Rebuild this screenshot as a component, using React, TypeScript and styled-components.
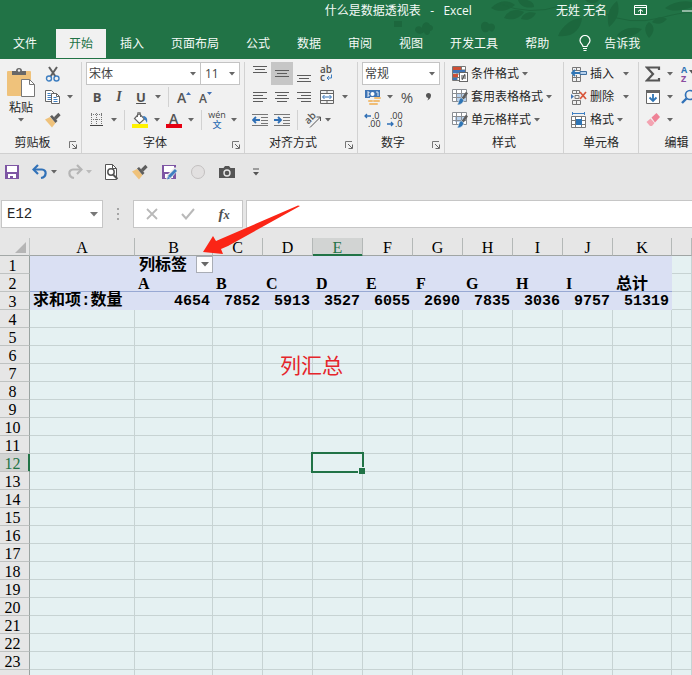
import React from "react";
import styled, { createGlobalStyle, css } from "styled-components";

const ui = `"Open Sans", "Noto Sans CJK SC", sans-serif`;
const serif = `"Liberation Serif", "Noto Sans CJK SC", serif`;
const mono = `"Liberation Mono", "Noto Sans CJK SC", monospace`;
const green = "#217346";

const GlobalStyle = createGlobalStyle`
  * { box-sizing: border-box; }
  body { margin: 0; overflow: hidden; background: #e6e6e6; }
  button, input, select { font: inherit; color: inherit; margin: 0; padding: 0; border: 0; background: none; border-radius: 0; }
  svg { display: block; flex: none; }
`;

const Page = styled.div`
  display: flex;
  flex-direction: column;
  height: 100vh;
  overflow: hidden;
  background: #e6e6e6;
  color: #262626;
  font: 12px/18px ${ui};
  white-space: nowrap;
`;

const Head = styled.header`
  position: relative;
  flex: none;
  background: ${green};
  color: #f4faf6;
`;

const Leaves = styled.svg`
  position: absolute;
  top: 0;
  right: 0;
`;

const TitleBar = styled.div`
  position: relative;
  display: flex;
  justify-content: flex-end;
  align-items: center;
  height: 29px;
  padding-bottom: 8px;
`;

const Title = styled.h1`
  margin: 0 84px 0 0;
  font: inherit;
  white-space: pre;
`;

const UserName = styled.span`
  margin-right: 27px;
`;

const WindowButton = styled.button<{ $gap?: number }>`
  margin-right: ${(p) => p.$gap ?? 0}px;
`;

const Tabs = styled.nav`
  position: relative;
  display: flex;
  gap: 1px;
  height: 29px;
`;

const Tab = styled.button<{ $active?: boolean; $first?: boolean }>`
  flex: none;
  padding: 0 13px;
  ${(p) => p.$first && css`min-width: 55px; text-align: left;`}
  ${(p) => p.$active && css`background: #f1f1f1; color: ${green};`}
`;

const TellMe = styled.button`
  display: flex;
  align-items: center;
  gap: 13px;
  padding: 0 16px;
`;

const Ribbon = styled.section`
  display: flex;
  flex: none;
  overflow: hidden;
  background: #f1f1f1;
  border-top: 1px solid ${green};
  border-bottom: 1px solid #d0d0d0;
  padding-top: 3px;
`;

const GroupBox = styled.div<{ $left: number; $right: number }>`
  display: flex;
  flex: none;
  flex-direction: column;
  border-right: 1px solid #d2d2d2;
  & > :first-child {
    padding: 0 ${(p) => p.$right}px 0 ${(p) => p.$left}px;
  }
`;

const Rows = styled.div`
  display: grid;
  grid-template-rows: repeat(3, 23px);
`;

const Row = styled.div`
  display: flex;
  align-items: center;
`;

const GroupFoot = styled.div<{ $launcher?: boolean }>`
  display: grid;
  grid-template-columns: ${(p) => (p.$launcher ? "1fr 16px" : "1fr")};
  align-items: center;
  height: 22px;
  padding-top: 2px;
  text-align: center;
`;

const Launcher = styled.button`
  display: flex;
  justify-content: center;
  padding-top: 4px;
`;

const Tool = styled.button<{ $w?: number; $on?: boolean }>`
  display: flex;
  align-items: center;
  justify-content: center;
  flex: none;
  width: ${(p) => p.$w ?? 22}px;
  height: 23px;
  background: ${(p) => (p.$on ? "#c6c6c6" : "none")};
`;

const Glyph = styled.span<{ $size?: number; $italic?: boolean; $underline?: boolean; $face?: string; $weight?: number }>`
  color: #505050;
  font-family: ${(p) => p.$face ?? ui};
  font-weight: ${(p) => p.$weight ?? 700};
  font-size: ${(p) => p.$size ?? 13}px;
  font-style: ${(p) => (p.$italic ? "italic" : "normal")};
  text-decoration: ${(p) => (p.$underline ? "underline" : "none")};
`;

const Divider = styled.span`
  width: 1px;
  height: 20px;
  margin: 0 4px;
  background: #d2d2d2;
`;

const PickerBox = styled.label<{ $w: number; $joined?: boolean }>`
  display: grid;
  grid-template-columns: 1fr 14px;
  align-items: center;
  width: ${(p) => p.$w}px;
  height: 23px;
  background: #fff;
  border: 1px solid #c4c4c4;
  border-left-width: ${(p) => (p.$joined ? 0 : 1)}px;
  svg { justify-self: center; }
  select {
    appearance: none;
    width: 100%;
    padding-left: ${(p) => (p.$joined ? 4 : 2)}px;
    color: #444;
    outline: none;
  }
`;

const Clipboard = styled.div`
  display: grid;
  grid-template-columns: 42px auto;
`;

const PasteButton = styled.button`
  display: flex;
  flex-direction: column;
  align-items: center;
  gap: 3px;
  padding-top: 5px;
  line-height: 14px;
`;

const Command = styled.button<{ $gap?: number }>`
  display: flex;
  align-items: center;
  gap: 3px;
  & > :last-child {
    margin-left: ${(p) => p.$gap ?? 0}px;
  }
`;

const QuickAccess = styled.div`
  display: flex;
  flex: none;
  align-items: center;
  gap: 7px;
  height: 36px;
  padding-left: 1px;
`;

const Pair = styled.div`
  display: flex;
`;

const FormulaBar = styled.div`
  display: flex;
  flex: none;
  height: 28px;
  margin: 10px 0;
  padding-left: 1px;
`;

const NameBox = styled.label`
  display: flex;
  align-items: center;
  width: 102px;
  padding: 0 4px 0 5px;
  border: 1px solid #c6c6c6;
  background: #fff;
  input {
    flex: 1;
    min-width: 0;
    outline: none;
    font: 14px/20px ${mono};
  }
`;

const Dots = styled.span`
  display: flex;
  flex: none;
  align-items: center;
  justify-content: center;
  width: 30px;
`;

const EntryButtons = styled.div`
  display: flex;
  flex: none;
  align-items: center;
  margin-right: 3px;
  border: 1px solid #c6c6c6;
  background: #fff;
`;

const FormulaInput = styled.input`
  && {
    flex: 1;
    min-width: 0;
    border: 1px solid #c6c6c6;
    border-right: 0;
    background: #fff;
    outline: none;
  }
`;

const Sheet = styled.main`
  position: relative;
  flex: 1;
  min-height: 0;
  color: #000;
`;

const SheetClip = styled.div`
  height: 100%;
  overflow: hidden;
`;

const Grid = styled.table`
  width: 100%;
  table-layout: fixed;
  border-collapse: separate;
  border-spacing: 0;
  font: 16px/15px ${serif};
  th { font-weight: normal; }
  th, td { height: 18px; padding: 2px 0 0; }
`;

const Corner = styled.th`
  border-right: 1px solid #c0c4c3;
  border-bottom: 1px solid #a3a8a7;
  svg { margin-left: auto; margin-right: 3px; }
`;

const ColHead = styled.th<{ $on?: boolean }>`
  border-right: 1px solid #b4b8b7;
  border-bottom: 1px solid #a0a5a4;
  ${(p) => p.$on && css`
    background: #d2d4d3;
    color: ${green};
    box-shadow: inset 0 -1px ${green};
    border-bottom-color: ${green};
  `}
`;

const RowHead = styled.th<{ $on?: boolean }>`
  && { padding-right: 4px; }
  border-right: 1px solid #9aa3a1;
  border-bottom: 1px solid #bfc2c1;
  ${(p) => p.$on && css`
    background: #d2d4d3;
    color: ${green};
    box-shadow: inset -1px 0 ${green};
    border-right-color: ${green};
  `}
`;

const Cell = styled.td`
  background: #e5f1f2;
  border-right: 1px solid #c7d3d3;
  border-bottom: 1px solid #c7d3d3;
`;

const ActiveCell = styled(Cell)`
  position: relative;
`;

const PivotCell = styled.td<{ $num?: boolean; $mono?: boolean; $rule?: boolean; $flush?: boolean }>`
  && { padding: ${(p) => (p.$flush ? "0 0 0 4px" : "2px 3px 0")}; }
  background: #dae0f3;
  border-bottom: 1px solid ${(p) => (p.$rule ? "#98a9d3" : "#dae0f3")};
  font-weight: bold;
  font-family: ${(p) => (p.$num || p.$mono ? mono : serif)};
  font-size: ${(p) => (p.$num ? 15 : 16)}px;
  text-align: ${(p) => (p.$num ? "right" : "left")};
`;

const Filtered = styled.div`
  display: flex;
  align-items: center;
  justify-content: space-between;
`;

const FilterButton = styled.button`
  display: flex;
  align-items: center;
  justify-content: center;
  width: 17px;
  height: 17px;
  border: 1px solid #a9adb5;
  background: #fcfcfd;
`;

const Selection = styled.span`
  position: absolute;
  inset: -2px;
  z-index: 1;
  border: 2px solid ${green};
  &::after {
    content: "";
    position: absolute;
    right: -3px;
    bottom: -3px;
    width: 6px;
    height: 6px;
    background: ${green};
    border: solid #e5f1f2;
    border-width: 1px 0 0 1px;
  }
`;

const Note = styled.span`
  position: absolute;
  left: 280px;
  top: 112px;
  color: #e5252b;
  font: 21px/28px "Noto Sans CJK SC", sans-serif;
`;

const Pointer = styled.svg`
  position: absolute;
  left: 203px;
  top: -34px;
  z-index: 2;
`;

type SvgProps = { w?: number; h?: number; children: React.ReactNode };
const Svg = ({ w = 16, h = 16, children }: SvgProps) => (
  <svg width={w} height={h} viewBox={`0 0 ${w} ${h}`} fill="none" aria-hidden="true">
    {children}
  </svg>
);

const Down = ({ color = "#666" }: { color?: string }) => (
  <Svg w={6} h={4}><path d="M0 0h6L3 3.6z" fill={color} /></Svg>
);

const Caret = ({ label, w = 12, color }: { label: string; w?: number; color?: string }) => (
  <Tool $w={w} aria-label={label}><Down color={color} /></Tool>
);

const Lines = ({ rows }: { rows: [number, number, number][] }) => (
  <Svg>
    {rows.map(([x, y, w]) => <path key={y} d={`M${x} ${y}.5h${w}`} stroke="#5c5c5c" />)}
  </Svg>
);

const LauncherIcon = () => (
  <Svg w={8} h={8}>
    <path d="M.5 7V.5H7" stroke="#777" />
    <path d="M3 3l4 4M7.500 3.500v4h-4" stroke="#666" />
  </Svg>
);

const PasteIcon = () => (
  <Svg w={30} h={31}>
    <rect x="1" y="4" width="24" height="25" rx="1" fill="#efc27b" />
    <path d="M6 8V4h4a3 3 0 0 1 6 0h4v4z" fill="#686868" />
    <circle cx="13" cy="3.500" r="1.200" fill="#f1f1f1" />
    <path d="M15.500 12.500h8l5 5v12h-13z" fill="#fff" stroke="#777" />
    <path d="M23.500 12.500v5h5" stroke="#777" />
  </Svg>
);

const CutIcon = () => (
  <Svg>
    <path d="M4 1l6.500 9.500M12 1L5.500 10.500" stroke="#5f5f5f" strokeWidth="2" />
    <circle cx="4" cy="12.500" r="2.500" stroke="#3f7fc1" strokeWidth="1.400" />
    <circle cx="11.500" cy="12.500" r="2.500" stroke="#3f7fc1" strokeWidth="1.400" />
  </Svg>
);

const CopyIcon = () => (
  <Svg>
    <path d="M.5 1.500h6l3 3v8h-9z" fill="#fff" stroke="#666" />
    <path d="M2.500 4.500h3M2.500 6.500h4M2.500 8.500h4M2.500 10.500h4" stroke="#3f7fc1" />
    <path d="M6.500 4.500h5l3 3v7h-8z" fill="#fff" stroke="#666" />
    <path d="M11.500 4.500v3h3" stroke="#666" />
    <path d="M8.500 8.500h3M8.500 10.500h4M8.500 12.500h4" stroke="#3f7fc1" />
  </Svg>
);

const BrushIcon = () => (
  <Svg>
    <path d="M0 7.500l5-2.500 5.500 6L7 15.500z" fill="#efc27b" />
    <path d="M5 4.500l2-1.500 5.500 6-2 2z" fill="#5e5e5e" />
    <path d="M10 6.500l4.500-4.500" stroke="#5e5e5e" strokeWidth="3.200" />
  </Svg>
);

const GrowIcon = ({ shrink }: { shrink?: boolean }) => (
  <Svg w={18} h={22}>
    <text x="2" y="17" fontFamily="Open Sans" fontWeight="600" fontSize={shrink ? 12 : 14} fill="#555">A</text>
    <path d={shrink ? "M10 6h5l-2.500 3z" : "M11 9h5l-2.500-3z"} fill="#3f6fb5" />
  </Svg>
);

const BorderIcon = () => (
  <Svg>
    <path d="M2.500 1v13M7.500 1v13M12.500 1v13M2 2.500h12M2 7.500h12" stroke="#777" strokeDasharray="1 1" />
    <path d="M1 13.500h13" stroke="#444" />
  </Svg>
);

const FillIcon = () => (
  <Svg w={18}>
    <path d="M8 1.500l5.500 5.500-5 4.500-5-5z" fill="#fff" stroke="#666" strokeWidth="1.200" />
    <path d="M6.500 5V1.500a1.500 1.500 0 0 1 3 0V5" stroke="#666" />
    <path d="M12 4c3 0 5 2 4 7-1-1-1-3-3-4z" fill="#3f7fc1" />
    <path d="M1 12h16v4H1z" fill="#fff200" />
  </Svg>
);

const FontColorIcon = () => (
  <Svg h={22}>
    <text x="3" y="15" fontFamily="Open Sans" fontWeight="600" fontSize="14" fill="#555">A</text>
    <path d="M0 15h16v4H0z" fill="#e60012" />
  </Svg>
);

const Phonetic = styled.span`
  display: grid;
  justify-items: center;
  font-size: 9px;
  line-height: 10px;
  color: #444;
  b { color: #2f6fb5; font-weight: 500; }
`;

const WrapIcon = () => (
  <Svg w={18} h={22}>
    <text x="2" y="10" fontFamily="Open Sans" fontWeight="600" fontSize="10" fill="#505050">ab</text>
    <text x="2" y="18" fontFamily="Open Sans" fontWeight="600" fontSize="10" fill="#505050">c</text>
    <path d="M13.500 11.500v3.500H9M11 13l-2 2 2 2" stroke="#3f7fc1" />
  </Svg>
);

const MergeIcon = () => (
  <Svg>
    <path d="M1.500 1.500h13v13h-13zM1.500 4.500h13M1.500 11.500h13M8 1v3.500M8 11.500v3" stroke="#666" />
    <path d="M2 5h12v6H2z" fill="#fff" />
    <path d="M4 8h8M5.500 6L3.500 8l2 2M10.500 6l2 2-2 2" stroke="#3272b8" />
  </Svg>
);

const IndentIcon = ({ more }: { more?: boolean }) => (
  <Svg>
    <path d="M0 2.500h16M9 5.500h7M9 8.500h7M9 11.500h7M0 13.500h16" stroke="#777" />
    <path d={more ? "M0 8h7M4 5l3 3-3 3" : "M1 8h7M4 5L1 8l3 3"} stroke="#2f6fb5" strokeWidth="1.800" />
  </Svg>
);

const OrientIcon = () => (
  <Svg w={20} h={20}>
    <text transform="rotate(-45 8 9)" x="2" y="11" fontFamily="Open Sans" fontWeight="600" fontSize="10" fill="#555">ab</text>
    <path d="M7 17.500L17.500 7M13.500 7h4v4" stroke="#555" />
  </Svg>
);

const MoneyIcon = () => (
  <Svg w={18}>
    <path d="M1 1h15v8H1z" fill="#3f74b5" />
    <path d="M3 3h2v1H4v2h1v1H3M14 3h-2M14 7V3" stroke="#dfe9f5" />
    <circle cx="8.500" cy="5" r="2" fill="#fff" />
    <path d="M6 8h12v8H4v-5h2z" fill="#f1f1f1" />
    <g fill="#f0bd75">
      <rect x="10" y="8" width="7" height="2" rx="1" /><rect x="9" y="11" width="7" height="2" rx="1" />
      <rect x="4" y="11" width="5" height="2" rx="1" /><rect x="5" y="14" width="9" height="2" rx="1" />
    </g>
  </Svg>
);

const CommaIcon = () => (
  <Svg w={6} h={8}><path d="M0 2.500a2.500 2.500 0 0 1 5 0C5 5 3 7 1 7.500 2 6.500 2.500 5.500 2 5A2.500 2.500 0 0 1 0 2.500z" fill="#555" /></Svg>
);

const DecimalIcon = ({ less }: { less?: boolean }) => (
  <Svg w={20} h={22}>
    <text x={less ? 5 : 9} y="10" fontFamily="Open Sans" fontSize="9" fill="#333">{less ? ".00" : ".0"}</text>
    <text x={less ? 10 : 5} y="18" fontFamily="Open Sans" fontSize="9" fill="#333">{less ? ".0" : ".00"}</text>
    <path d={less ? "M2 15h6M6 13l2 2-2 2" : "M2 7h6M4 5L2 7l2 2"} stroke="#2f6fb5" strokeWidth="1.300" />
  </Svg>
);

const ConditionalIcon = () => (
  <Svg>
    <path d="M.5.5h13v14H.5zM5 0v15M9.500 0v6M0 4h14M0 8h9M0 11.500h9" fill="#fff" stroke="#777" />
    <path d="M1 1h8v3H1zM1 8h5v3H1z" fill="#cf4f35" /><path d="M1 4h12v3H1zM1 12h4v2H1z" fill="#3f74b5" />
    <rect x="7.500" y="6.500" width="8" height="9" fill="#fff" stroke="#666" />
    <path d="M9 10h5M9 12h5M13 8l-3 6" stroke="#444" />
  </Svg>
);

const StyleIcon = ({ single }: { single?: boolean }) => (
  <Svg>
    <path d="M.5.5h14v12H.5z" fill="#fff" />
    <path d={single ? "M3 4h9v6H3z" : "M4 4h11v9H4z"} fill="#b7d0eb" />
    <path d="M.5.5h14v12H.5zM0 4.500h15M0 8.500h15M4.500 0v13M9.500 0v13" stroke="#8a8e93" />
    <path d="M15 3.500L10.500 10" stroke="#5e5e5e" strokeWidth="2.600" />
    <path d="M9 8.500l3 2.500c-1 3-3 5-7 5 2-2 1-5 4-7.500z" fill="#2f75b5" stroke="#f1f1f1" strokeWidth=".6" />
  </Svg>
);

const InsertIcon = () => (
  <Svg>
    <path d="M1.500 1.500h8v3h-8zM5.500 1v3M1.500 11.500h8v4h-8zM5.500 9v7M1.500 9v3M9.500 9v3" stroke="#777" />
    <path d="M9 5.500h6.500v3H9z" fill="#b7d0eb" stroke="#3f6f9f" />
    <path d="M1 7h8M4 4L1 7l3 3" stroke="#2f75b5" strokeWidth="1.800" />
  </Svg>
);

const DeleteIcon = () => (
  <Svg>
    <path d="M1.500 1.500h7v3h-7zM5.500 1v3M1.500 11.500h8v4h-8zM5.500 11v4M4 6.500h4v3H4z" stroke="#777" />
    <path d="M0 5v5l3-2.500z" fill="#3f74b5" />
    <path d="M9 3l6 7M15 3L9 10" stroke="#d9573b" strokeWidth="1.700" />
  </Svg>
);

const FormatIcon = () => (
  <Svg>
    <path d="M.5 4.500h14v11H.5zM4.500 4v12M10.500 4v12M0 8.500h15M0 12.500h15" fill="#fff" stroke="#777" />
    <path d="M5 7h6v6H5z" fill="#2f75b5" />
    <path d="M1 1.500h13M1.500 0v3M13.500 0v3" stroke="#3f7fc1" />
  </Svg>
);

const SumIcon = () => (
  <Svg><path d="M14 4V1.500H2L8 8l-6 6.500h12V12" stroke="#555" strokeWidth="2.200" /></Svg>
);

const SortIcon = () => (
  <Svg w={20} h={22}>
    <text x="4" y="10" fontFamily="Open Sans" fontWeight="700" fontSize="9" fill="#2f75b5">A</text>
    <text x="4" y="19" fontFamily="Open Sans" fontWeight="700" fontSize="9" fill="#8b4da0">Z</text>
    <path d="M12 7h8l-4 5z" fill="#555" />
  </Svg>
);

const FillDownIcon = () => (
  <Svg>
    <path d="M1.500 1.500h13v13h-13z" fill="#fff" stroke="#666" /><path d="M1 1h14v3H1z" fill="#666" />
    <path d="M8 5v7M4.500 8.500L8 12l3.500-3.500" stroke="#2f75b5" strokeWidth="1.800" />
  </Svg>
);

const FindIcon = () => (
  <Svg w={20}>
    <circle cx="13" cy="6" r="4.500" stroke="#3272b8" strokeWidth="1.700" />
    <path d="M9.500 9.500L5 14" stroke="#3272b8" strokeWidth="2.400" />
  </Svg>
);

const EraserIcon = () => (
  <Svg>
    <path d="M6.500 5.500L11.500 1l3.500 4-5 5.500z" fill="#ee8296" /><path d="M5.500 6.500L9.500 11 7 14H5L1.500 10z" fill="#f3a3b1" />
  </Svg>
);

const SaveIcon = ({ edit }: { edit?: boolean }) => (
  <Svg>
    <path d="M1 1h14v14H1z" fill="#7e56a4" />
    <path d="M3 2h10v6H3z" fill="#fff" />
    <path d="M4 10h8v4H4z" fill="#fff" /><path d="M6 12h3v2H6z" fill="#7e56a4" />
    {edit && <><path d="M5 16l1-5 8-8 3 3-8 10z" fill="#e6e6e6" /><path d="M8 13l7-7" stroke="#3f7fc1" strokeWidth="3" /><path d="M6 15.500l1-3 2 2z" fill="#3f7fc1" /></>}
  </Svg>
);

const UndoIcon = ({ redo }: { redo?: boolean }) => (
  <Svg>
    <g transform={redo ? "matrix(-1 0 0 1 16 0)" : undefined} stroke={redo ? "#b5b5b5" : "#3272b8"} strokeWidth="2.200">
      <path d="M2 5.500h8c5 0 5 7.500-1 8.500" /><path d="M6 1L1.500 5.500 6 10" />
    </g>
  </Svg>
);

const PreviewIcon = () => (
  <Svg>
    <path d="M2.500.5h7l4 4v11h-11z" fill="#fff" stroke="#555" /><path d="M9.500.5v4h4" stroke="#555" />
    <circle cx="8" cy="8" r="3.200" fill="#fff" stroke="#555" strokeWidth="1.500" />
    <path d="M10 10.500l4.500 4.500" stroke="#555" strokeWidth="2" />
  </Svg>
);

const CameraIcon = () => (
  <Svg>
    <path d="M0 4h4.500L6 2h4l1.500 2H16v10H0z" fill="#555" />
    <circle cx="8" cy="9" r="3" fill="#555" stroke="#e6e6e6" strokeWidth="1.400" />
  </Svg>
);

const BulbIcon = () => (
  <Svg w={12} h={17}>
    <path d="M4 11.500c0-2-3-3-3-6a5 5 0 0 1 10 0c0 3-3 4-3 6zM4 13.500h4M4.500 15.500h3" stroke="#fff" strokeWidth="1.200" />
  </Svg>
);

const DisplayIcon = () => (
  <Svg w={13} h={11}>
    <path d="M.5.5h12v9H.5zM.5 2.500h12M6.500 9V4.500M4 6.500l2.500-2L9 6.500" stroke="#fff" />
  </Svg>
);

type PickerProps = { label: string; value: string; w: number; joined?: boolean };
const Picker = ({ label, value, w, joined }: PickerProps) => (
  <PickerBox $w={w} $joined={joined}>
    <select aria-label={label} defaultValue={value}><option>{value}</option></select>
    <Down />
  </PickerBox>
);

type GroupProps = { label: string; left?: number; right?: number; launcher?: boolean; children: React.ReactNode };
const Group = ({ label, left = 4, right = 4, launcher, children }: GroupProps) => (
  <GroupBox $left={left} $right={right}>
    {children}
    <GroupFoot $launcher={launcher}>
      <span>{label}</span>
      {launcher && <Launcher aria-label={`${label}设置`}><LauncherIcon /></Launcher>}
    </GroupFoot>
  </GroupBox>
);

const tabs = ["文件", "开始", "插入", "页面布局", "公式", "数据", "审阅", "视图", "开发工具", "帮助"];
const columns: [string, number][] = [
  ["A", 105], ["B", 78], ["C", 50], ["D", 50], ["E", 50], ["F", 50],
  ["G", 50], ["H", 50], ["I", 50], ["J", 50], ["K", 59],
];
const pivotLabels = ["", "A", "B", "C", "D", "E", "F", "G", "H", "I", "总计"];
const pivotValues = ["4654", "7852", "5913", "3527", "6055", "2690", "7835", "3036", "9757", "51319"];
const emptyRows = Array.from({ length: 21 }, (_, i) => i + 4);

const RibbonGroups = () => (
  <Ribbon>
    <Group label="剪贴板" left={0} right={5} launcher>
      <Clipboard>
        <PasteButton><PasteIcon /><span>粘贴</span><Down /></PasteButton>
        <Rows>
          <Row><Tool aria-label="剪切"><CutIcon /></Tool></Row>
          <Row><Tool aria-label="复制"><CopyIcon /></Tool><Caret label="复制选项" /></Row>
          <Row><Tool aria-label="格式刷"><BrushIcon /></Tool></Row>
        </Rows>
      </Clipboard>
    </Group>
    <Group label="字体" launcher>
      <Rows>
        <Row><Picker label="字体" value="宋体" w={115} /><Picker label="字号" value="11" w={39} joined /></Row>
        <Row>
          <Tool aria-label="加粗"><Glyph>B</Glyph></Tool>
          <Tool aria-label="倾斜"><Glyph $italic $size={14} $face={serif}>I</Glyph></Tool>
          <Tool aria-label="下划线"><Glyph $underline>U</Glyph></Tool>
          <Caret label="下划线选项" /><Divider />
          <Tool aria-label="增大字号"><GrowIcon /></Tool>
          <Tool aria-label="减小字号"><GrowIcon shrink /></Tool>
        </Row>
        <Row>
          <Tool aria-label="边框"><BorderIcon /></Tool><Caret label="边框选项" /><Divider />
          <Tool aria-label="填充颜色"><FillIcon /></Tool><Caret label="填充选项" />
          <Tool aria-label="字体颜色"><FontColorIcon /></Tool><Caret label="颜色选项" /><Divider />
          <Tool aria-label="拼音"><Phonetic>wén<b>文</b></Phonetic></Tool><Caret label="拼音选项" />
        </Row>
      </Rows>
    </Group>
    <Group label="对齐方式" right={6} launcher>
      <Rows>
        <Row>
          <Tool aria-label="顶端对齐"><Lines rows={[[1, 0, 14], [3, 3, 10], [1, 6, 14]]} /></Tool>
          <Tool $on aria-label="垂直居中"><Lines rows={[[1, 4, 14], [3, 7, 10], [1, 10, 14]]} /></Tool>
          <Tool aria-label="底端对齐"><Lines rows={[[1, 9, 14], [3, 12, 10], [1, 15, 14]]} /></Tool>
          <Tool $w={24} aria-label="自动换行"><WrapIcon /></Tool>
        </Row>
        <Row>
          <Tool aria-label="左对齐"><Lines rows={[[1, 3, 14], [1, 6, 10], [1, 9, 14], [1, 12, 10]]} /></Tool>
          <Tool aria-label="居中"><Lines rows={[[1, 3, 14], [3, 6, 10], [1, 9, 14], [3, 12, 10]]} /></Tool>
          <Tool aria-label="右对齐"><Lines rows={[[1, 3, 14], [5, 6, 10], [1, 9, 14], [5, 12, 10]]} /></Tool>
          <Tool $w={24} aria-label="合并"><MergeIcon /></Tool><Caret label="合并选项" />
        </Row>
        <Row>
          <Tool aria-label="减少缩进"><IndentIcon /></Tool>
          <Tool aria-label="增加缩进"><IndentIcon more /></Tool><Divider />
          <Tool aria-label="方向"><OrientIcon /></Tool><Caret label="方向选项" w={8} />
        </Row>
      </Rows>
    </Group>
    <Group label="数字" launcher>
      <Rows>
        <Row><Picker label="数字格式" value="常规" w={78} /></Row>
        <Row>
          <Tool aria-label="货币"><MoneyIcon /></Tool><Caret label="货币选项" />
          <Tool aria-label="百分比"><Glyph $size={15} $weight={500}>%</Glyph></Tool>
          <Tool aria-label="千位分隔"><CommaIcon /></Tool>
        </Row>
        <Row>
          <Tool aria-label="增加小数位"><DecimalIcon /></Tool>
          <Tool aria-label="减少小数位"><DecimalIcon less /></Tool>
        </Row>
      </Rows>
    </Group>
    <Group label="样式" left={7} right={11}>
      <Rows>
        <Command><ConditionalIcon />条件格式<Down /></Command>
        <Command><StyleIcon />套用表格格式<Down /></Command>
        <Command><StyleIcon single />单元格样式<Down /></Command>
      </Rows>
    </Group>
    <Group label="单元格" left={7} right={9}>
      <Rows>
        <Command $gap={6}><InsertIcon />插入<Down /></Command>
        <Command $gap={6}><DeleteIcon />删除<Down /></Command>
        <Command><FormatIcon />格式<Down /></Command>
      </Rows>
    </Group>
    <Group label="编辑" left={3}>
      <Rows>
        <Row><Tool aria-label="求和"><SumIcon /></Tool><Caret label="求和选项" /><Tool aria-label="排序和筛选"><SortIcon /></Tool><Caret label="排序选项" /></Row>
        <Row><Tool aria-label="填充"><FillDownIcon /></Tool><Caret label="填充方向" /><Tool aria-label="查找"><FindIcon /></Tool><Caret label="查找选项" /></Row>
        <Row><Tool aria-label="清除"><EraserIcon /></Tool><Caret label="清除选项" /></Row>
      </Rows>
    </Group>
  </Ribbon>
);

export default function App() {
  return (
    <Page>
      <GlobalStyle />
      <Head>
        <Leaves width="300" height="58" viewBox="392 0 300 58" fill="#1c673d" aria-hidden="true">
          <path d="M491 8c8-8 16-9 24-3-7 6-16 8-24 3zM504 18c4-8 12-10 20-6-5 7-12 9-20 6zM518 0c2 6 8 9 16 7 0-4-3-6-7-7zM521 19c2-6 8-8 15-6-3 6-8 8-15 6z" />
          <path d="M558 36c4-10 14-18 24-18-1 10-8 20-24 18zM609 27c-3-10 0-20 8-26 4 10 0 20-8 26zM617 36c4-7 14-10 25-7-6 7-16 10-25 7zM649 38c-5-6-5-12 0-16 6 4 6 10 0 16zM652 22c4-5 10-6 15-3-4 5-10 6-15 3zM665 8c8-6 18-8 27-6v5c-10 4-20 5-27 1zM585 0c4 4 10 5 14 0z" />
          <path d="M481 26c0-4 5-6 8-2 4-2 8 2 5 6-2 3-4 1-5 0-2 4-8 3-8-4zM394 21h8v6h-8zM415 30c0-4 5-5 7-2 0-6 6-8 8-3 4 0 4 6 0 6 0 5-5 5-6 1-3 3-8 2-9-2z" />
          <path d="M600 12q30 14 60 6t32-4M500 4q30 12 60 2" stroke="#1c673d" fill="none" />
        </Leaves>
        <TitleBar>
          <Title>什么是数据透视表   -   Excel</Title>
          <UserName>无姓 无名</UserName>
          <WindowButton $gap={35} aria-label="功能区显示选项"><DisplayIcon /></WindowButton>
          <WindowButton aria-label="最小化"><Svg w={10} h={2}><path d="M0 1h10" stroke="#fff" /></Svg></WindowButton>
        </TitleBar>
        <Tabs>
          {tabs.map((t, i) => <Tab key={t} $first={i === 0} $active={i === 1}>{t}</Tab>)}
          <TellMe><BulbIcon />告诉我</TellMe>
        </Tabs>
      </Head>
      <RibbonGroups />
      <QuickAccess>
        <Tool aria-label="保存"><SaveIcon /></Tool>
        <Pair><Tool $w={20} aria-label="撤消"><UndoIcon /></Tool><Caret label="撤消列表" w={8} /></Pair>
        <Pair><Tool $w={20} aria-label="恢复"><UndoIcon redo /></Tool><Caret label="恢复列表" w={8} color="#bbb" /></Pair>
        <Tool aria-label="打印预览"><PreviewIcon /></Tool>
        <Tool aria-label="格式刷"><BrushIcon /></Tool>
        <Tool aria-label="另存为"><SaveIcon edit /></Tool>
        <Tool aria-label="录制"><Svg><circle cx="8" cy="8" r="6.500" fill="#e2e0e0" stroke="#c3c0c0" /></Svg></Tool>
        <Tool aria-label="照相机"><CameraIcon /></Tool>
        <Tool aria-label="自定义快速访问工具栏"><Svg w={6} h={8}><path d="M0 1h6" stroke="#555" /><path d="M0 4h6L3 7.500z" fill="#555" /></Svg></Tool>
      </QuickAccess>
      <FormulaBar>
        <NameBox><input aria-label="名称框" defaultValue="E12" /><Svg w={8} h={5}><path d="M0 0h8L4 4.500z" fill="#777" /></Svg></NameBox>
        <Dots><Svg w={2} h={12}><path d="M0 0h2v2H0zM0 5h2v2H0zM0 10h2v2H0z" fill="#a5a5a5" /></Svg></Dots>
        <EntryButtons>
          <Tool $w={36} aria-label="取消"><Svg w={12} h={12}><path d="M1 1l10 10M11 1L1 11" stroke="#b9b9b9" strokeWidth="1.800" /></Svg></Tool>
          <Tool $w={36} aria-label="输入"><Svg w={14} h={12}><path d="M1 6l4 4.500L13 1" stroke="#b9b9b9" strokeWidth="2" /></Svg></Tool>
          <Tool $w={36} aria-label="插入函数"><Glyph $italic $size={15} $face={serif}>f<small>x</small></Glyph></Tool>
        </EntryButtons>
        <FormulaInput aria-label="编辑栏" />
      </FormulaBar>
      <Sheet>
        <SheetClip>
          <Grid>
            <colgroup>
              <col width={30} />
              {columns.map(([c, w]) => <col key={c} width={w} />)}
              <col />
            </colgroup>
            <thead>
              <tr>
                <Corner><Svg w={11} h={11}><path d="M11 0v11H0z" fill="#b5b5b5" /></Svg></Corner>
                {columns.map(([c]) => <ColHead key={c} $on={c === "E"}>{c}</ColHead>)}
                <ColHead />
              </tr>
            </thead>
            <tbody>
              <tr>
                <RowHead>1</RowHead>
                <PivotCell />
                <PivotCell $flush><Filtered>列标签<FilterButton aria-label="筛选列标签"><Svg w={8} h={5}><path d="M0 0h8L4 4.500z" fill="#666" /></Svg></FilterButton></Filtered></PivotCell>
                {columns.slice(2).map(([c]) => <PivotCell key={c} />)}
                <Cell />
              </tr>
              <tr>
                <RowHead>2</RowHead>
                {pivotLabels.map((t, i) => <PivotCell key={i} $rule>{t}</PivotCell>)}
                <Cell />
              </tr>
              <tr>
                <RowHead>3</RowHead>
                <PivotCell $mono>求和项:数量</PivotCell>
                {pivotValues.map((v) => <PivotCell key={v} $num>{v}</PivotCell>)}
                <Cell />
              </tr>
              {emptyRows.map((n) => (
                <tr key={n}>
                  <RowHead $on={n === 12}>{n < 24 && n}</RowHead>
                  {columns.map(([c]) =>
                    n === 12 && c === "E" ? <ActiveCell key={c}><Selection /></ActiveCell> : <Cell key={c} />
                  )}
                  <Cell />
                </tr>
              ))}
            </tbody>
          </Grid>
        </SheetClip>
        <Note>列汇总</Note>
        <Pointer width="98" height="50" viewBox="0 0 98 50" aria-hidden="true">
          <path d="M0 48L10 32l3 5L95 1.500l2 .5L25 42l-7 3 2 5z" fill="#fb2516" />
        </Pointer>
      </Sheet>
    </Page>
  );
}
